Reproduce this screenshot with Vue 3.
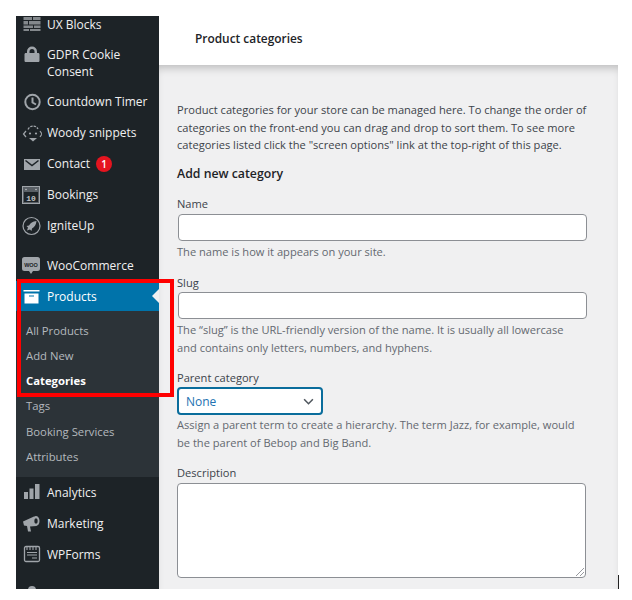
<script setup>
const top = [
  { label: 'UX Blocks', icon: 'ux' },
  { label: 'GDPR Cookie Consent', icon: 'lock', tall: true },
  { label: 'Countdown Timer', icon: 'clock' },
  { label: 'Woody snippets', icon: 'woody' },
  { label: 'Contact', icon: 'mail', badge: 1 },
  { label: 'Bookings', icon: 'cal' },
  { label: 'IgniteUp', icon: 'rocket' },
]
const subs = [
  { label: 'All Products' },
  { label: 'Add New' },
  { label: 'Categories', on: true },
  { label: 'Tags' },
  { label: 'Booking Services' },
  { label: 'Attributes' },
]
const bottom = [
  { label: 'Analytics', icon: 'bars' },
  { label: 'Marketing', icon: 'mega' },
  { label: 'WPForms', icon: 'forms' },
]
</script>

<template>
  <div class="page">
    <aside class="side">
      <div class="menu top">
        <div v-for="m in top" :key="m.label" class="item" :class="{ tall: m.tall }">
          <span class="ic">
            <svg v-if="m.icon === 'ux'" viewBox="0 0 20 20" width="20" height="20" fill="#83888c"><path d="M1.500 2H10v3H1.500zM11 2h7.500v3H11zM1.500 6H6v3.500H1.500zM7 6h11.500v3.500H7zM1.500 10.500H11v2.500H1.500zM12 10.500h6.500V13H12zM1.500 14H7v2H1.500zM8 14h10.500v2H8z"/></svg>
            <svg v-else-if="m.icon === 'lock'" viewBox="0 0 20 20" width="20" height="20" fill="#a0a5aa"><path d="M5 8V6.500a5 5 0 0 1 10 0V8h1.200c.7 0 1.300.6 1.300 1.300v6.400c0 .7-.6 1.300-1.300 1.300H3.800c-.7 0-1.300-.6-1.300-1.300V9.300C2.500 8.600 3.100 8 3.800 8zM7.500 8h5V6.500a2.500 2.500 0 0 0-5 0z"/></svg>
            <svg v-else-if="m.icon === 'clock'" viewBox="0 0 20 20" width="20" height="20" fill="none" stroke="#a0a5aa" stroke-width="2"><circle cx="10.500" cy="10" r="7.200"/><path d="M10.500 5.500v5l3.500 2"/></svg>
            <svg v-else-if="m.icon === 'woody'" viewBox="0 0 20 20" width="20" height="20" fill="none" stroke="#a0a5aa" stroke-width="1.200"><path d="M6 6.500a5.500 5.500 0 0 1 10-.5" stroke-dasharray="2.500 1"/><path d="M4 8l-2.500 3L4 14M18 8l2 3-2 3"/><circle cx="8" cy="10.500" r="1.100" fill="#a0a5aa" stroke="none"/><circle cx="14" cy="10.500" r="1.100" fill="#a0a5aa" stroke="none"/><path d="M7 15h8l-4 3.500z" fill="#a0a5aa" stroke="none"/></svg>
            <svg v-else-if="m.icon === 'mail'" viewBox="0 0 20 20" width="20" height="20"><rect x="2" y="5" width="16" height="11" fill="#a0a5aa"/><path d="M3.500 6.500L10 11.500l6.500-5" fill="none" stroke="#1d2327" stroke-width="1.500"/></svg>
            <svg v-else-if="m.icon === 'cal'" viewBox="0 0 20 20" width="20" height="20"><rect x="0" y="1" width="18" height="18" fill="#a0a5aa"/><rect x="1" y="2" width="16" height="16" fill="#5a6066"/><rect x="2" y="7" width="14" height="10" fill="#1d2327"/><circle cx="4" cy="4.500" r=".8" fill="#c3c4c7"/><circle cx="14" cy="4.500" r=".8" fill="#c3c4c7"/><text x="9" y="15.500" text-anchor="middle" class="caltext">10</text></svg>
            <svg v-else-if="m.icon === 'rocket'" viewBox="0 0 20 20" width="20" height="20"><circle cx="9.500" cy="10" r="8.500" fill="none" stroke="#a0a5aa" stroke-width="1.200"/><path d="M14.500 5c-4 .5-6 2-7.500 4.500L4.500 10 6 11.500l-1 3 3-1 1.500 1.500.5-2.500C12.500 11 14 9 14.500 5z" fill="#a0a5aa"/></svg>
          </span>
          <span class="lab">{{ m.label }}</span>
          <span v-if="m.badge" class="badge">{{ m.badge }}</span>
        </div>
      </div>

      <div class="item woo">
        <span class="ic">
          <svg viewBox="0 0 20 20" width="20" height="20"><path d="M2.500 1h13a2.500 2.500 0 0 1 2.500 2.500v9a2.500 2.500 0 0 1-2.500 2.500h-4.500l-2 3-2-3h-4.500A2.500 2.500 0 0 1 0 12.500v-9A2.500 2.500 0 0 1 2.500 1z" fill="#a0a5aa"/><text x="9" y="10.500" text-anchor="middle" class="wootext">WOO</text></svg>
        </span>
        <span class="lab">WooCommerce</span>
      </div>

      <div class="item cur">
        <span class="ic">
          <svg viewBox="0 0 20 20" width="20" height="20" fill="#fff"><path d="M1.500 4h16v1.500h-16zM2.500 7.500h14V17.500h-14z"/><rect x="7" y="9.500" width="5" height="1" fill="#0073aa"/></svg>
        </span>
        <span class="lab">Products</span>
      </div>

      <div class="sub">
        <div v-for="s in subs" :key="s.label" class="subitem" :class="{ on: s.on }">{{ s.label }}</div>
      </div>

      <div class="menu">
        <div v-for="m in bottom" :key="m.label" class="item">
          <span class="ic">
            <svg v-if="m.icon === 'bars'" viewBox="0 0 20 20" width="20" height="20" fill="#a0a5aa"><path d="M2 10h4v7H2zM7.500 6.500h4V17h-4zM13 2h4.500v15H13z"/></svg>
            <svg v-else-if="m.icon === 'mega'" viewBox="0 0 20 20" width="20" height="20"><path d="M1 8.500L12 3.500l2.500 9.500-6.500.5 1 5H6L5 13l-3-.5z" fill="#a0a5aa"/><ellipse cx="14" cy="8" rx="3.500" ry="5" fill="#a0a5aa"/><ellipse cx="14" cy="8" rx="1.700" ry="2.800" fill="#1d2327"/></svg>
            <svg v-else viewBox="0 0 20 20" width="20" height="20" fill="none" stroke="#a0a5aa" stroke-width="1.300"><rect x="2.500" y="2.500" width="15" height="15" rx="1.500"/><path d="M5 3v3M8 3v3M11 3v3M14 3v3M5 8.500h10M5 11h10M10 14h5" stroke-width="1.100"/></svg>
          </span>
          <span class="lab">{{ m.label }}</span>
        </div>
        <div class="item more">
          <span class="ic">
            <svg viewBox="0 0 20 20" width="20" height="20" fill="#a0a5aa"><circle cx="10" cy="6" r="4"/><path d="M3 17c0-4 3-6 7-6s7 2 7 6z"/></svg>
          </span>
        </div>
      </div>
    </aside>

    <main class="main">
      <header class="head">Product categories</header>
      <div class="body">
        <p class="intro">Product categories for your store can be managed here. To change the order of categories on the front-end you can drag and drop to sort them. To see more categories listed click the "screen options" link at the top-right of this page.</p>
        <h2 class="h">Add new category</h2>

        <label class="lbl name">Name</label>
        <div class="field"></div>
        <p class="hint">The name is how it appears on your site.</p>

        <label class="lbl slug">Slug</label>
        <div class="field tight"></div>
        <p class="hint">The “slug” is the URL-friendly version of the name. It is usually all lowercase and contains only letters, numbers, and hyphens.</p>

        <label class="lbl parent">Parent category</label>
        <div class="select">
          <span>None</span>
          <svg viewBox="0 0 12 8" width="11" height="7" fill="none" stroke="#50575e" stroke-width="1.800"><path d="M1 1.500l5 5 5-5"/></svg>
        </div>
        <p class="hint close">Assign a parent term to create a hierarchy. The term Jazz, for example, would be the parent of Bebop and Big Band.</p>

        <label class="lbl desc">Description</label>
        <div class="area">
          <svg class="grip" viewBox="0 0 8 8" width="8" height="8" fill="none" stroke="#8c8f94" stroke-width="0.900"><path d="M0 8l8-8M4 8l4-4"/></svg>
        </div>
      </div>
    </main>

    <div class="redbox"></div>
    <div class="tick"></div>
  </div>
</template>

<style>
html, body { margin: 0; background: #fff; }
</style>

<style scoped>
.page {
  position: relative;
  width: 632px;
  height: 600px;
  padding: 16px 14px 11px 16px;
  box-sizing: border-box;
  display: flex;
  overflow: hidden;
  font-family: "Open Sans", "Noto Sans", sans-serif;
  font-size: 12px;
}
.side {
  width: 143px;
  flex: none;
  background: #1d2327;
  color: #f0f0f1;
  overflow: hidden;
}
.menu.top { margin-top: -7px; }
.item {
  display: flex;
  align-items: center;
  height: 31px;
  padding-left: 3px;
  color: #f0f0f1;
}
.item.tall { height: 46px; align-items: flex-start; }
.item.tall .ic { margin-top: 5px; }
.item.tall .lab { line-height: 16.500px; padding-top: 7px; width: 108px; }
.item.woo { margin-top: 9px; }
.item.more { margin-top: 9px; }
.ic {
  width: 26px;
  display: flex;
  justify-content: center;
  flex: none;
}
.lab { padding-left: 2px; }
.caltext { font: bold 8px "Liberation Mono", monospace; fill: #c3c4c7; }
.wootext { font: bold 5.500px "Liberation Sans", sans-serif; fill: #1d2327; }
.badge {
  margin-left: 6px;
  width: 16px;
  height: 16px;
  border-radius: 50%;
  background: #e5141f;
  color: #fff;
  font-size: 10px;
  font-weight: 600;
  line-height: 16px;
  text-align: center;
}
.cur {
  position: relative;
  background: #0073aa;
  color: #fff;
  height: 30px;
}
.cur::after {
  content: "";
  position: absolute;
  right: 0;
  top: 8px;
  border: 7px solid transparent;
  border-right-color: #f0f0f1;
  border-left-width: 0;
}
.sub {
  background: #2c3338;
  padding: 6.500px 0 7.500px;
}
.subitem {
  height: 25.300px;
  line-height: 25px;
  padding-left: 10px;
  font-size: 11.300px;
  color: #b4b9be;
}
.subitem.on { color: #fff; font-weight: 700; }

.main {
  flex: 1;
  min-width: 0;
  display: flex;
  flex-direction: column;
}
.head {
  height: 49px;
  padding-left: 36px;
  line-height: 44px;
  font-weight: 600;
  font-size: 11.900px;
  color: #1d2327;
  background: #fff;
}
.body {
  flex: 1;
  background: #f0f0f1;
  box-shadow: inset 0 7px 8px -4px rgba(0, 0, 0, .22);
  padding: 36px 32px 0 18px;
  color: #3c434a;
  font-size: 11.100px;
  overflow: hidden;
}
.intro {
  margin: 0 -3px 0 0;
  line-height: 17.500px;
}
.h {
  margin: 11.500px 0 0;
  font-size: 12.300px;
  line-height: 18px;
  font-weight: 600;
  color: #1d2327;
}
.lbl {
  display: block;
  line-height: 17px;
}
.lbl.name { margin-top: 11.500px; }
.lbl.slug { margin-top: 13.500px; }
.lbl.parent { margin-top: 13px; }
.lbl.desc { margin-top: 13px; }
.field {
  height: 27px;
  margin: 2.500px 0 0 1px;
  box-sizing: border-box;
  background: #fff;
  border: 1px solid #8c8f94;
  border-radius: 4px;
  width: 409px;
}
.field.tight { margin-top: 1px; }
.hint {
  margin: 2px 0 0;
  color: #646970;
  line-height: 17.500px;
}
.hint.close { margin-top: 1px; }
.select {
  width: 146px;
  height: 28px;
  box-sizing: border-box;
  background: #fff;
  border: 2px solid #0a6d9c;
  border-radius: 4px;
  display: flex;
  align-items: center;
  justify-content: space-between;
  padding: 0 7px;
  color: #2271b1;
  font-size: 12px;
  margin-top: 1px;
}
.area {
  position: relative;
  width: 409px;
  height: 95px;
  margin-top: 2px;
  box-sizing: border-box;
  background: #fff;
  border: 1px solid #8c8f94;
  border-radius: 4px;
}
.grip { position: absolute; right: 1px; bottom: 1px; }
.redbox {
  position: absolute;
  left: 17px;
  top: 279px;
  width: 157px;
  height: 118px;
  box-sizing: border-box;
  border: 4px solid #ff0000;
  pointer-events: none;
}
.tick {
  position: absolute;
  left: 618px;
  top: 575px;
  width: 1px;
  height: 14px;
  background: #222;
}
</style>
